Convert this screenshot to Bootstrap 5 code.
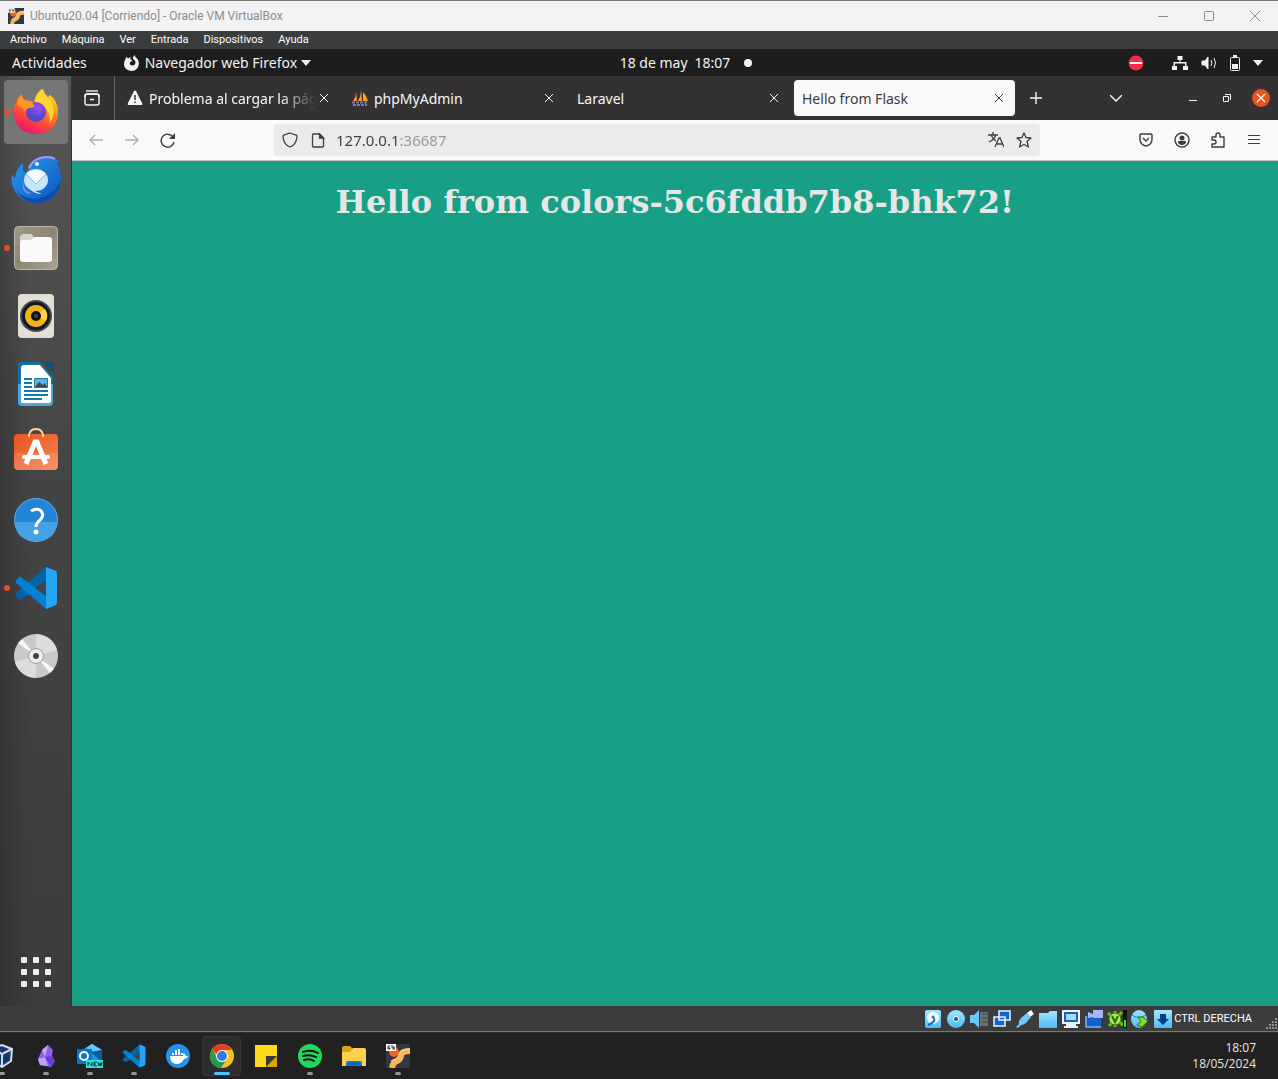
<!DOCTYPE html>
<html lang="es">
<head>
<meta charset="utf-8">
<meta name="viewport" content="width=device-width, initial-scale=1">
<title>Ubuntu20.04 [Corriendo] - Oracle VM VirtualBox</title>
<link href="https://cdn.jsdelivr.net/npm/bootstrap@5.3.0/dist/css/bootstrap.min.css" rel="stylesheet">
<style>
  body { font-family: "Noto Sans", sans-serif; font-size: 14px; line-height: 20px; background: #3b3c3e; overflow-x: hidden; }
  svg { display: block; flex: none; }
  button { border: 0; background: none; padding: 0; color: inherit; }
  .bare { display: flex; align-items: center; justify-content: center; flex: none; }

  /* host window */
  .host-title { height: 31px; border-top: 1px solid #79777a; background: #f3f3f3; color: #8c8c8c; font: 12px/16px Roboto, sans-serif; padding-left: 8px; gap: 6px; }
  .host-title .bare { width: 46px; height: 28px; margin-left: -6px; }
  .host-menu { height: 18px; background: #3b3c3e; font: 11px/16px Roboto, sans-serif; gap: 15px; padding: 0 10px; }
  .host-menu a { color: #fff; text-decoration: none; }
  .host-status { height: 26px; padding-right: 26px; border-bottom: 1px solid #777; font: 11px/16px Roboto, sans-serif; color: #fff; position: relative; }
  .host-status .bare { width: 23px; height: 22px; }
  .grip { position: absolute; right: 0; bottom: 1px; }

  /* guest desktop */
  .guest-bar { height: 27px; background: #1d1d1d; color: #f2f2f2; display: grid; grid-template-columns: 1fr auto 1fr; align-items: center; }
  .guest-left { padding-left: 12px; gap: 36px; }
  .guest-clock { padding-left: 94px; gap: 14px; }
  .guest-right { padding-right: 15px; gap: 28px; }
  .guest-right .bare { gap: 13px; }
  .dock { width: 72px; padding: 4px 4px 2px; gap: 4px; background: linear-gradient(90deg, rgba(0,0,0,.18), transparent 30px), linear-gradient(#565656, #444 45%, #3b3c3e); border-right: 1px solid #333; }
  .dock button { width: 64px; height: 64px; border-radius: 4px; position: relative; }
  .dock .running::before { content: ""; position: absolute; left: 0; top: 29px; width: 6px; height: 6px; border-radius: 50%; background: #e05320; }
  .dock .focused { background: #767676; }

  /* browser */
  .browser { min-width: 0; }
  .tabstrip { height: 44px; background: #343132; color: #f7f7f7; }
  .tab-history { width: 43px; height: 44px; padding-right: 2px; border-right: 1px solid #676566; margin-right: 4px; }
  .page-tabs { gap: 4px; min-width: 0; }
  .page-tab { width: 221px; height: 36px; padding: 0 8px; border-radius: 4px; min-width: 60px; }
  .page-tab > svg { margin-right: 6px; }
  .page-tab.current { background: #f9f9f9; color: #3d3d3d; }
  .tab-label { flex: 1 1 0; min-width: 0; padding-top: 2px; overflow: hidden; white-space: nowrap; text-align: left; }
  .tab-label.faded { -webkit-mask-image: linear-gradient(270deg, transparent, #000 36px); mask-image: linear-gradient(270deg, transparent, #000 36px); }
  .tab-x { width: 16px; height: 20px; }
  .win-btn { width: 34px; height: 36px; }
  .win-group { margin-left: 43px; }
  .toolbar-row { height: 41px; background: #f9f9f9; border-bottom: 1px solid #c9c5c8; padding: 0 6px; color: #3d3d3d; }
  .toolbar-row > .bare, .tool-group > .bare { width: 36px; height: 32px; }
  .address { height: 32px; margin: 0 88px; background: #ebebeb; border-radius: 4px; padding: 0 2px; min-width: 0; }
  .address .bare { width: 28px; height: 32px; }
  .address input { border: 0; outline: 0; padding: 0; margin-left: 4px; min-width: 0; height: 24px; font-size: 15px; color: transparent; background: linear-gradient(90deg, #3d3d3d 63px, #969696 63px); -webkit-background-clip: text; background-clip: text; }
  .page-view { background: #18a086; color: #e6e6e6; }
  .page-view h1 { font: bold 32px/38px "DejaVu Serif", serif; margin: 22px 8px; }

  /* host taskbar */
  .host-task { height: 47px; background: #212121; border-top: 1px solid #303030; overflow: hidden; color: #e6e6e6; font: 12px/16px "Open Sans", sans-serif; }
  .task-apps { margin-left: -20px; }
  .task-apps button { width: 44px; height: 46px; position: relative; }
  .task-apps .on::after { content: ""; position: absolute; left: 19px; bottom: 4px; width: 6px; height: 3px; border-radius: 2px; background: #999; }
  .task-apps .front::after { left: 14px; width: 16px; background: #4cc2ff; }
  .task-apps .front::before { content: ""; position: absolute; left: 2px; top: 3px; width: 39px; height: 40px; border-radius: 4px; background: #2d2d2d; border: 1px solid #373737; }
  .task-apps svg { position: relative; }
  .task-clock { padding-right: 22px; }
</style>
<script src="https://cdn.jsdelivr.net/npm/bootstrap@5.3.0/dist/js/bootstrap.bundle.min.js"></script>
</head>
<body class="d-flex flex-column min-vh-100">
<svg width="0" height="0" class="position-absolute" aria-hidden="true">
  <defs>
    <linearGradient id="fox" x1=".8" y1="0" x2=".3" y2="1"><stop offset="0" stop-color="#ffe226"/><stop offset=".35" stop-color="#ff9a1f"/><stop offset=".7" stop-color="#ff4438"/><stop offset="1" stop-color="#e5127c"/></linearGradient>
    <radialGradient id="globe" cx=".6" cy=".3"><stop offset="0" stop-color="#a24bff"/><stop offset="1" stop-color="#5448c8"/></radialGradient>
    <linearGradient id="bird" x1="0" y1="0" x2="1" y2="1"><stop offset="0" stop-color="#2b9bf0"/><stop offset="1" stop-color="#0a54bd"/></linearGradient>
    <linearGradient id="cyan" x1="0" y1="0" x2="0" y2="1"><stop offset="0" stop-color="#a4e6ff"/><stop offset="1" stop-color="#4bbcf3"/></linearGradient>
    <linearGradient id="orange" x1="0" y1="0" x2="1" y2="1"><stop offset="0" stop-color="#e95420"/><stop offset="1" stop-color="#f5834f"/></linearGradient>
    <linearGradient id="sand" x1="0" y1="0" x2="1" y2="1"><stop offset="0" stop-color="#a09a88"/><stop offset=".5" stop-color="#8d8673"/><stop offset="1" stop-color="#aaa491"/></linearGradient>
    <symbol id="code" viewBox="0 0 44 44"><path fill="#0065a9" d="M32 1 43 5v10L7 33q-1 1-2 0l-3-3q-1-2 0-3z"/><path fill="#0082d1" d="m7 11 36 27-11 5L2 17q-1-2 0-3l3-3q1-1 2 0z"/><path fill="#24a5f5" d="M32 1 42 5q1 1 1 2v30q0 1-1 2l-10 4V1z"/><path fill="#444" d="M32 14v16L21 22z"/></symbol>
    <symbol id="vbox" viewBox="0 0 24 24"><path fill="#313744" d="M0 0h24v24H0z"/><circle cx="8" cy="8" r="5" fill="#f0642a"/><path d="M24 7q-9 0-9 5 0 3-4 5-4 1-5 7" fill="none" stroke="#f8b55a" stroke-width="6"/><path d="M24 5q-9 0-11 6-1 4-8 6" fill="none" stroke="#ffe0a0"/><path fill="#fff" d="M0 0h10v7H0z"/><path d="M4 2H2v3h2V4H2M6 1v3h3M8 2v4" fill="none" stroke="#333"/></symbol>
  </defs>
</svg>

<header>
  <div class="host-title d-flex align-items-center">
    <svg width="16" height="16"><use href="#vbox"/></svg>
    <span class="me-auto">Ubuntu20.04 [Corriendo] - Oracle VM VirtualBox</span>
    <button class="bare" aria-label="Minimizar"><svg width="10" height="10" stroke="#8c8c8c"><path d="M0 5.500h10"/></svg></button>
    <button class="bare" aria-label="Maximizar"><svg width="10" height="10" fill="none" stroke="#8c8c8c"><rect x=".5" y=".5" width="9" height="9" rx="1"/></svg></button>
    <button class="bare" aria-label="Cerrar"><svg width="10" height="10" stroke="#8c8c8c"><path d="m0 0 10 10M10 0 0 10"/></svg></button>
  </div>
  <nav class="host-menu d-flex align-items-center">
    <a href="#">Archivo</a><a href="#">Máquina</a><a href="#">Ver</a><a href="#">Entrada</a><a href="#">Dispositivos</a><a href="#">Ayuda</a>
  </nav>
  <div class="guest-bar">
    <div class="guest-left d-flex align-items-center">
      <button>Actividades</button>
      <button class="bare gap-1">
        <svg width="18" height="16" viewBox="0 0 18 16"><path fill="#f2f2f2" fill-rule="evenodd" d="M2.500 4Q3 2 4 1.500 4 3 5 3.500 6.500 2 8.500 2 7 3 7 4l2 1q0 2-2 2-1 3 2 3.500 3.500 0 3.500-3.500Q12 5 10 4q-.5-2 1.500-4 .5 2 2 3Q16 5 16 8.500 15 16 8.500 16 1 15 1 9q0-3 1.500-5z"/></svg>
        <span>Navegador web Firefox</span>
        <svg width="10" height="6" fill="#f2f2f2"><path d="M0 0h10L5 6z"/></svg>
      </button>
    </div>
    <button class="guest-clock d-flex align-items-center"><span>18 de may&ensp;18:07</span><svg width="8" height="8"><circle cx="4" cy="4" r="4" fill="#f2f2f2"/></svg></button>
    <div class="guest-right d-flex align-items-center justify-content-end">
      <svg width="16" height="16"><circle cx="8" cy="8" r="7.500" fill="#f22c42"/><path fill="#fff" d="M2 7h12v2H2z"/></svg>
      <button class="bare" aria-label="Menú del sistema">
        <svg width="16" height="16" fill="#f2f2f2"><path d="M5.500 1h5v4h-2v2h6v4H16v4h-5v-4h2V8.500H3V11h2v4H0v-4h1.500V7h6V5h-2z"/></svg>
        <svg width="16" height="16" fill="none" stroke="#f2f2f2"><path fill="#f2f2f2" d="M1 6h3l3-4v12l-3-4H1z"/><path d="M10 5q2 3 0 6M13 3q3 5 0 10"/></svg>
        <svg width="10" height="16"><rect x=".5" y="2.500" width="9" height="13" rx="1" fill="none" stroke="#f2f2f2"/><path fill="#f2f2f2" d="M3 0h4v2H3zM2 9h6v5H2z"/></svg>
        <svg width="10" height="6" fill="#f2f2f2"><path d="M0 0h10L5 6z"/></svg>
      </button>
    </div>
  </div>
</header>

<div class="d-flex flex-grow-1">
  <aside class="dock d-flex flex-column flex-shrink-0">
    <button class="bare running focused" aria-label="Firefox"><svg width="48" height="48" viewBox="0 0 48 48"><path fill="url(#fox)" d="M4 14q2-6 6-7 0 4 3 5l9 2q1-8 8-13 2 4 6 8l2-2q8 6 8 17-1 21-22 22Q4 45 2 27q-1-8 2-13z"/><path fill="#ffd42f" d="M23 14Q23 6 31 1q2 8 8 12 6 10-1 22 0-18-15-21z"/><circle cx="24" cy="24" r="10" fill="url(#globe)"/><path fill="#ff9727" d="M5 17Q7 9 10 7q0 4 4 6 5-1 8 4 2 3-5 3-3 1-4 4-1-5-8-7z"/></svg></button>
    <button class="bare" aria-label="Thunderbird"><svg width="50" height="48" viewBox="0 0 50 48"><path fill="url(#bird)" d="M18 12Q22 1 36 1q4 0 6 2l6 1-2 3 2 4q2 5 2 12-1 21-22 24Q9 47 3 33-1 26 1 19l3 3q1-9 8-15v8l3 2z"/><path fill="#0b4fae" d="M6 36q16 12 32 2 8-5 12-14-2 20-22 23-14 1-22-11z"/><path d="M18 12Q23 1 36 1q5 0 8 2" fill="none" stroke="#a995ff" stroke-width="2"/><path fill="#8d86ef" d="M13 25q-2 9 7 12l-2 1q-9-3-5-13z"/><ellipse cx="25" cy="24" rx="12" ry="11" fill="#c5e6ff"/><path d="m15 18 10 10 10-10q-10-8-20 0z" fill="#f5fbff"/><path d="m15 18 10 10 10-10" fill="none" stroke="#85b7eb"/><path fill="#d9f0ff" d="M19 32q6 4 12 6-8 0-13-6z"/><circle cx="26" cy="8" r="2" fill="#eaf6ff"/></svg></button>
    <button class="bare running" aria-label="Archivos"><svg width="44" height="44"><rect x=".5" y=".5" width="43" height="43" rx="4" fill="url(#sand)" stroke="#b9b4a4"/><path fill="#d8d5cb" d="M6 12q0-4 4-4h7l4 4h14q3 0 3 3v9H6z"/><rect x="6" y="14" width="32" height="22" rx="3" fill="#fafafa"/><path fill="#fafafa" d="M17 14l4-3h14q3 0 3 3v6z"/></svg></button>
    <button class="bare" aria-label="Rhythmbox"><svg width="36" height="44"><rect width="36" height="44" rx="4" fill="#e3dfd5"/><circle cx="18" cy="22" r="16" fill="#454a52"/><circle cx="18" cy="22" r="14" fill="#111827"/><circle cx="18" cy="22" r="11" fill="#eeb413"/><path fill="#ffd64b" d="m18 22 9-7q4 6 1 12z"/><circle cx="18" cy="22" r="5" fill="#111"/><circle cx="18" cy="22" r="2" fill="#444"/></svg></button>
    <button class="bare" aria-label="LibreOffice Writer"><svg width="38" height="46"><path fill="#146da3" d="M4 1h19l13 15v25q0 4-4 4H5q-4 0-4-4V4q0-3 3-3z"/><path fill="#4aa7d8" d="M1 23h35v18q0 4-4 4H5q-4 0-4-4z"/><path fill="#0c547f" d="M27 1h10v10z"/><path fill="#fff" d="M7 4h16l11 13v23q0 2-2 2H6q-2 0-2-2V7q0-3 3-3z"/><path d="M7 18h8M7 22h8M7 26h8M7 30h24M7 34h24M7 38h18" stroke="#1878aa" stroke-width="2"/><path fill="#55b4e5" stroke="#1878aa" d="M17.500 17.500h13v9h-13z"/><path fill="#444" d="m18 26 4-5 4 3 2-2 2 4z"/></svg></button>
    <button class="bare" aria-label="Ubuntu Software"><svg class="overflow-visible" width="44" height="44" viewBox="0 4 44 44"><path d="M15 11q0-8 7-8t7 8" fill="none" stroke="#f5d69e" stroke-width="2"/><rect y="8" width="44" height="36" rx="4" fill="url(#orange)"/><path fill="#fff" opacity=".12" d="M0 27h44v13q0 4-4 4H4q-4 0-4-4z"/><path d="M15 8v3m14-3v3" stroke="#f5d69e" stroke-width="2"/><path d="m12 38 9-22h2l9 22" fill="none" stroke="#fff" stroke-width="5"/><path d="M10 31h24" stroke="#fff" stroke-width="4" stroke-linecap="round"/></svg></button>
    <button class="bare" aria-label="Ayuda"><svg width="44" height="44"><circle cx="22" cy="22" r="21.500" fill="#2385d8" stroke="#64aee9"/><path fill="#45a0e5" d="M1 24h42q-1 19-21 19T1 24z"/><path d="M17 13q5-3 9-1 5 4 1 9-5 4-5 8" fill="none" stroke="#fff" stroke-width="3"/><circle cx="22" cy="34" r="2.500" fill="#fff"/></svg></button>
    <button class="bare running" aria-label="Visual Studio Code"><svg width="44" height="44"><use href="#code"/></svg></button>
    <button class="bare" aria-label="Disco"><svg width="44" height="44"><circle cx="22" cy="22" r="22" fill="#c9c9c9"/><path fill="#ddd" d="M22 22V0Q38 1 43 16zM22 22v22Q6 43 1 28z"/><path fill="#f8f8f8" d="M22 22 4 9l4-4zM22 22l18 13-4 4z"/><circle cx="22" cy="22" r="7.500" fill="#eee" stroke="#a29d8c"/><circle cx="22" cy="22" r="3" fill="#444"/></svg></button>
    <button class="bare mt-auto" aria-label="Mostrar aplicaciones"><svg width="30" height="30" fill="#eee"><g id="dots"><rect width="6" height="6" rx="1"/><rect x="12" width="6" height="6" rx="1"/><rect x="24" width="6" height="6" rx="1"/></g><use href="#dots" y="12"/><use href="#dots" y="24"/></svg></button>
  </aside>

  <main class="browser d-flex flex-column flex-grow-1">
    <div class="tabstrip d-flex align-items-center">
      <button class="bare tab-history" aria-label="Historial de pestañas"><svg width="16" height="16" fill="none" stroke="#f7f7f7" stroke-width="1.400"><path d="M2 1h12"/><rect x="1" y="4" width="14" height="11" rx="2"/><path d="M1 7q0-3 3-3h8q3 0 3 3M6 9.500h4"/></svg></button>
      <div class="page-tabs d-flex" role="tablist">
        <div class="page-tab d-flex align-items-center" role="tab"><svg width="16" height="16"><path fill="#f7f7f7" d="M7 1q1-1 2 0l6 12q1 2-1 2H2q-2 0-1-2z"/><path d="M8 5v5M8 11.500V13" stroke="#343132" stroke-width="1.500"/></svg><span class="tab-label faded">Problema al cargar la pág</span><button class="bare tab-x" aria-label="Cerrar pestaña"><svg width="8" height="8" stroke="#f7f7f7"><path d="m0 0 8 8M8 0 0 8"/></svg></button></div>
        <div class="page-tab d-flex align-items-center" role="tab"><svg width="16" height="16"><path fill="#f89c2a" d="M1 11q3-4 3-9l1 9zM6 11q3-5 3-11l1 11zM11 11V2q4 4 5 9z"/><path d="M0 12.500h16M1 15h14" stroke="#7b7ba8" stroke-width="2" stroke-dasharray="3 1"/></svg><span class="tab-label">phpMyAdmin</span><button class="bare tab-x" aria-label="Cerrar pestaña"><svg width="8" height="8" stroke="#f7f7f7"><path d="m0 0 8 8M8 0 0 8"/></svg></button></div>
        <div class="page-tab d-flex align-items-center" role="tab"><span class="tab-label">Laravel</span><button class="bare tab-x" aria-label="Cerrar pestaña"><svg width="8" height="8" stroke="#f7f7f7"><path d="m0 0 8 8M8 0 0 8"/></svg></button></div>
        <div class="page-tab current d-flex align-items-center" role="tab" aria-selected="true"><span class="tab-label">Hello from Flask</span><button class="bare tab-x" aria-label="Cerrar pestaña"><svg width="8" height="8" stroke="#3d3d3d"><path d="m0 0 8 8M8 0 0 8"/></svg></button></div>
      </div>
      <button class="bare win-btn ms-1" aria-label="Nueva pestaña"><svg width="12" height="12" stroke="#f7f7f7" stroke-width="1.400"><path d="M6 0v12M0 6h12"/></svg></button>
      <button class="bare win-btn ms-auto" aria-label="Listar pestañas"><svg width="12" height="7" fill="none" stroke="#f7f7f7" stroke-width="1.400"><path d="m0 0 6 6 6-6"/></svg></button>
      <div class="win-group d-flex">
        <button class="bare win-btn" aria-label="Minimizar"><svg width="8" height="8" stroke="#f7f7f7"><path d="M0 6.500h8"/></svg></button>
        <button class="bare win-btn" aria-label="Restaurar"><svg width="8" height="8" fill="none" stroke="#f7f7f7"><path d="M.5 2.500h5v5h-5zM2 .5h5.500V6"/></svg></button>
        <button class="bare win-btn" aria-label="Cerrar ventana"><svg width="18" height="18"><circle cx="9" cy="9" r="9" fill="#e95420"/><path d="m5 5 8 8m0-8-8 8" stroke="#fff" stroke-width="1.300"/></svg></button>
      </div>
    </div>
    <div class="toolbar-row d-flex align-items-center">
      <button class="bare" aria-label="Atrás"><svg width="14" height="12" fill="none" stroke="#b0b0b0" stroke-width="1.400"><path d="M14 6H1M6 1 1 6l5 5"/></svg></button>
      <button class="bare" aria-label="Adelante"><svg width="14" height="12" fill="none" stroke="#b0b0b0" stroke-width="1.400"><path d="M0 6h13M8 1l5 5-5 5"/></svg></button>
      <button class="bare" aria-label="Recargar"><svg width="16" height="16" fill="none" stroke="#3d3d3d" stroke-width="1.400"><path d="M13 5a6.500 6.500 0 1 0 1 5"/><path fill="#3d3d3d" stroke="none" d="M15 1v6H9z"/></svg></button>
      <div class="address d-flex align-items-center flex-grow-1">
        <button class="bare" aria-label="Protección"><svg width="16" height="16" fill="none" stroke="#3d3d3d" stroke-width="1.300"><path d="m8 1 6 2q1 0 1 2-1 8-7 10-6-2-7-10 0-2 1-2z"/></svg></button>
        <button class="bare" aria-label="Información del sitio"><svg width="16" height="16" fill="none" stroke="#3d3d3d" stroke-width="1.300"><path d="M3.500 2h6l4 4v8q0 1-1 1h-9q-1 0-1-1V3q0-1 1-1z"/><path fill="#3d3d3d" d="M9.500 2v4h4z"/></svg></button>
        <input class="flex-grow-1" type="text" value="127.0.0.1:36687" aria-label="Dirección" spellcheck="false">
        <button class="bare" aria-label="Traducir"><svg width="16" height="16" fill="none" stroke="#3d3d3d" stroke-width="1.300"><path d="M0 3h10M5 0v3M8 3q-2 5-7 7M3 3q2 4 5 6M7 15l4-9h1l4 9M9 12h6"/></svg></button>
        <button class="bare" aria-label="Añadir marcador"><svg width="16" height="16" fill="none" stroke="#3d3d3d" stroke-width="1.300" stroke-linejoin="round"><path d="m8 1 2 4.500 5 .5-4 3.500 1.500 5.500L8 12.500 3.500 15 5 9.500 1 6l5-.5z"/></svg></button>
      </div>
      <div class="tool-group d-flex">
        <button class="bare" aria-label="Pocket"><svg width="14" height="14" fill="none" stroke="#3d3d3d" stroke-width="1.400"><path d="M2 1h10q1 0 1 1v4q0 6-6 7-6-1-6-7V2q0-1 1-1z"/><path d="m4 5 3 3 3-3"/></svg></button>
        <button class="bare" aria-label="Cuenta"><svg width="16" height="16"><circle cx="8" cy="8" r="7" fill="none" stroke="#3d3d3d" stroke-width="1.400"/><circle cx="8" cy="6" r="2.500" fill="#3d3d3d"/><path fill="#3d3d3d" d="M4 9h8q0 4-4 4T4 9z"/></svg></button>
        <button class="bare" aria-label="Extensiones"><svg width="16" height="16" fill="none" stroke="#3d3d3d" stroke-width="1.400" stroke-linejoin="round"><path d="M6 5V3q0-2 2-2t2 2v2h4v10H2v-3h2q2 0 2-2T4 8H2V5z"/></svg></button>
        <button class="bare" aria-label="Menú"><svg width="12" height="10" stroke="#3d3d3d"><path d="M0 .5h12M0 4.500h12M0 8.500h12"/></svg></button>
      </div>
    </div>
    <section class="page-view flex-grow-1 text-center">
      <h1>Hello from colors-5c6fddb7b8-bhk72!</h1>
    </section>
  </main>
</div>

<footer>
  <div class="host-status d-flex align-items-center justify-content-end">
    <button class="bare" aria-label="Disco duro"><svg width="18" height="18"><rect x="1" width="16" height="18" rx="2" fill="url(#cyan)"/><circle cx="9" cy="8" r="6" fill="#f4fbff"/><circle cx="9" cy="7" r="1.500" fill="#2374c9"/><path d="M10 8q2 4-6 7" fill="none" stroke="#1768bd" stroke-width="2"/></svg></button>
    <button class="bare" aria-label="Disco óptico"><svg width="18" height="18"><circle cx="9" cy="9" r="9" fill="url(#cyan)"/><circle cx="9" cy="9" r="2.500" fill="#175790" stroke="#fff"/></svg></button>
    <button class="bare" aria-label="Audio"><svg width="18" height="18"><path fill="#68c8f7" d="M0 5h4l5-5v18l-5-5H0z"/><path fill="#6c7073" d="M10 2h8v14h-8z"/><path d="M12 4h6m-6 4h6m-6 4h6" stroke="#42474b"/></svg></button>
    <button class="bare" aria-label="Red"><svg width="18" height="18" fill="#1167c7" stroke="#e8f4ff" stroke-width="1.500"><path d="M6 1h11v9H6zM1 7h11v9H1z"/></svg></button>
    <button class="bare" aria-label="USB"><svg width="18" height="18"><path fill="#fff" d="m11 3 4-3 3 4-4 3z"/><path fill="#70caf9" d="m5 8 6-5 4 4-5 6q-2 2-5 2l-3 3-2-1 3-3q-1-3 2-6z"/></svg></button>
    <button class="bare" aria-label="Carpetas compartidas"><svg width="18" height="18"><path fill="url(#cyan)" d="M0 3h9l2-2h7v17H0z"/></svg></button>
    <button class="bare" aria-label="Pantalla"><svg width="18" height="18"><path fill="#e9f4ff" d="M0 0h18v14h-4v2h2v2H2v-2h2v-2H0z"/><path fill="#1d64b6" d="M2 2h14v10H2z"/><path fill="#a5dcff" d="M4 4h10v6H4z"/></svg></button>
    <button class="bare" aria-label="Grabación"><svg width="18" height="18"><path fill="#1360cd" d="M0 6h16v12H0z"/><path fill="#a8b4ff" d="M8 0h10v8H8zM3 2l5 2v3L3 8z"/><path d="M1 6v11h15" fill="none" stroke="#b8d5ff"/></svg></button>
    <button class="bare" aria-label="Virtualización"><svg width="20" height="18"><path d="m1 3 15 12M15 2 2 16M8 1v16" stroke="#67bd20" stroke-width="3"/><ellipse cx="8" cy="9" rx="6" ry="6" fill="#a4ed48" stroke="#397710"/><path d="m5 6 3 6 3-6" fill="none" stroke="#286b08" stroke-width="2"/><path fill="#111" d="M16 0h4v18h-4z"/><path fill="#24ef22" d="M17 10h2v7h-2z"/></svg></button>
    <button class="bare" aria-label="Integración del ratón"><svg width="20" height="18"><ellipse cx="9" cy="9" rx="8" ry="9" fill="url(#cyan)"/><path d="M2 5q6 5 14 0" fill="none" stroke="#247fbe"/><path fill="#85da2b" stroke="#397710" d="M8 7h5l5 4-6 6-5-2 4-3z"/></svg></button>
    <button class="bare" aria-label="Teclado"><svg width="18" height="18"><rect width="18" height="18" rx="1" fill="url(#cyan)"/><path fill="#083c82" d="M6 4h6v5h3l-6 6-6-6h3z"/></svg></button>
    <span>CTRL DERECHA</span>
    <svg class="grip" width="12" height="12" stroke="#8a8a8a" stroke-width="2" stroke-dasharray="2 1"><path d="M9 1h3M6 4h6M3 7h9M0 10h12"/></svg>
  </div>
  <div class="host-task d-flex align-items-center">
    <div class="task-apps d-flex me-auto">
      <button class="bare on" aria-label="VirtualBox"><svg width="24" height="24" viewBox="0 0 24 24"><path fill="#183963" stroke="#cfdceb" stroke-width="2" d="m4 4 8-3 10 4-1 12-9 6-8-5z"/><path d="m4 5 8 5 10-5M12 10v13" fill="none" stroke="#cfdceb" stroke-width="2"/></svg></button>
      <button class="bare on" aria-label="Obsidian"><svg width="24" height="24"><path fill="#8e5ff0" d="m14 1 5 5-1 6 3 5-4 6-11-2-2-6 4-9z"/><path fill="#c0a3ff" d="m14 1-3 12-3-7zM4 15l7-2 3 9-8-1z"/><path fill="#6e3bd1" d="m11 13 7-1 3 5-4 6z"/></svg></button>
      <button class="bare on" aria-label="Outlook"><svg width="26" height="24"><path fill="#2692df" d="M5 6 15 0l10 6v14H5z"/><path fill="#66c9ff" d="m9 4 8 4 8-2-10-6z"/><path fill="#0759a8" d="M14 8 25 6v12z"/><rect y="5" width="15" height="15" rx="1" fill="#0875cf"/><circle cx="7" cy="12" r="4" fill="none" stroke="#fff" stroke-width="2"/><path fill="#33e2d5" d="M9 16h17v8H9z"/><path d="M11 22v-4l4 4v-4m5 0h-3v4h3m-3-2h2m2-2 1 4 1-3 1 3 1-4" fill="none" stroke="#06324b"/></svg></button>
      <button class="bare on" aria-label="Visual Studio Code"><svg width="24" height="24"><use href="#code"/></svg></button>
      <button class="bare" aria-label="Docker"><svg width="24" height="24"><circle cx="12" cy="12" r="12" fill="#2491ed"/><path fill="#fff" d="M4 12h13q0-3 1-3l2 3h2q-1 3-4 3-2 5-8 5-6-1-6-8zM6 9h2v2H6zm3-3h2v5H9zm3-1h2v6h-2zm3 4h2v2h-2z"/></svg></button>
      <button class="bare on front" aria-label="Chrome"><svg width="24" height="24"><circle cx="12" cy="12" r="12" fill="#fbc116"/><path fill="#e33b2e" d="M2 5q4-5 10-5t10 6H12q-4 0-5 5z"/><path fill="#229c4d" d="M2 5q-4 7 0 14 4 5 9 5l6-9-5 3q-4 0-5-4z"/><circle cx="12" cy="12" r="6" fill="#fff"/><circle cx="12" cy="12" r="5" fill="#3179ed"/></svg></button>
      <button class="bare" aria-label="Notas rápidas"><svg width="22" height="22"><path fill="#ffd91a" d="M0 0h22v11L11 22H0z"/><path fill="#383838" d="M11 11h11L11 22z"/><path fill="#e6a300" d="m22 11-11 11h11z"/></svg></button>
      <button class="bare on" aria-label="Spotify"><svg width="24" height="24"><circle cx="12" cy="12" r="12" fill="#20d760"/><path d="M5 8q8-3 15 1M5 12q7-2 13 1M6 16q6-2 10 1" fill="none" stroke="#101a13" stroke-width="2" stroke-linecap="round"/></svg></button>
      <button class="bare" aria-label="Explorador de archivos"><svg width="24" height="22"><path fill="#df9f18" d="M0 3q0-2 2-2h6l3 3v5H0z"/><path fill="#ffcf4e" d="M0 7h8l3-4h11q2 0 2 2v16H0z"/><path fill="#0879cf" d="M4 21v-3q0-2 2-2h12q2 0 2 2v3z"/><path d="M8 19h8" stroke="#075197"/></svg></button>
      <button class="bare on" aria-label="Máquina virtual"><svg width="24" height="24"><use href="#vbox"/></svg></button>
    </div>
    <div class="task-clock text-end">18:07<br>18/05/2024</div>
  </div>
</footer>
</body>
</html>
